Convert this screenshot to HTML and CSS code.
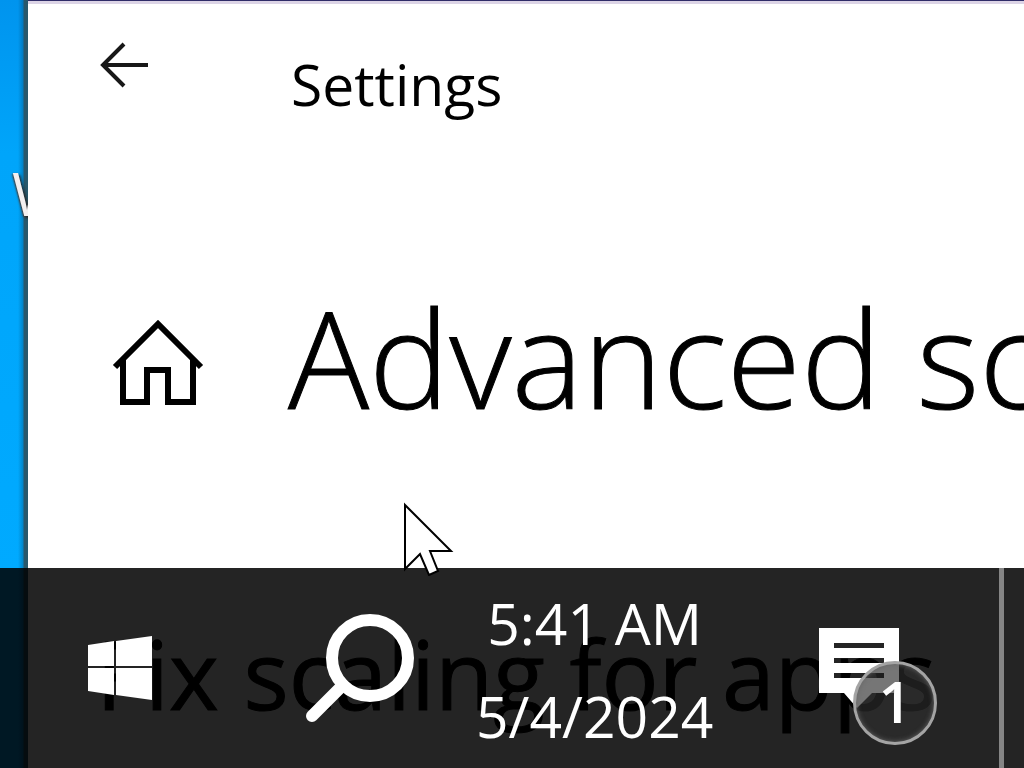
FILE: index.html
```html
<!DOCTYPE html>
<html lang="en">
<head>
<meta charset="utf-8">
<title>Settings</title>
<meta name="viewport" content="width=device-width, initial-scale=1">
<link rel="stylesheet" href="styles.css">
</head>
<body>
<div class="desktop">
  <aside class="wallpaper"><span class="shortcut-label">W</span></aside>
  <main class="window">
    <header class="titlebar">
      <button class="icon-button back" type="button" aria-label="Back">
        <svg width="50" height="46" viewBox="0 0 50 46" fill="none" stroke="#181818" stroke-width="4"><path d="M49 23H4M25 2L4 23L25 44"/></svg>
      </button>
      <span class="app-name">Settings</span>
    </header>
    <div class="page-head">
      <button class="icon-button home" type="button" aria-label="Home">
        <svg width="94" height="88" viewBox="0 0 94 88" fill="none" stroke="#000" stroke-width="6"><path d="M3 49L46 6L89 49M11 41V84H35V52H56V84H81V41"/></svg>
      </button>
      <h1 class="page-title">Advanced scaling settings</h1>
    </div>
    <h2 class="section-title">Fix scaling for apps</h2>
  </main>
</div>
<footer class="taskbar">
  <button class="icon-button start" type="button" aria-label="Start">
    <svg width="64" height="64" viewBox="0 0 64 64" fill="#fff"><path d="M0 9L26 5V30H0ZM28 5L64 0V30H28ZM0 32H26V59L0 55ZM28 32H64V64L28 59Z"/></svg>
  </button>
  <button class="icon-button search" type="button" aria-label="Search">
    <svg width="110" height="110" viewBox="0 0 110 110" fill="none" stroke="#fff"><circle cx="64" cy="45" r="38" stroke-width="12"/><path d="M37 72L6 103" stroke-width="12" stroke-linecap="round"/></svg>
  </button>
  <button class="icon-button clock" type="button"><time>5:41 AM</time><time>5/4/2024</time></button>
  <button class="icon-button notices" type="button" aria-label="1 new notification">
    <svg width="80" height="80" viewBox="0 0 80 80"><path fill="#fff" fill-rule="evenodd" d="M0 0H80V65H53L38 80L25 65H0ZM15 15V20H65V15ZM15 30V35H65V30ZM15 45V50H65V45Z"/></svg>
    <span class="badge">1</span>
  </button>
  <button class="icon-button show-desktop" type="button" aria-label="Show desktop"></button>
</footer>
<svg class="cursor" width="52" height="74" viewBox="0 0 52 74" fill="#fff" stroke="#000" stroke-width="2"><path d="M2 3V67L17 52L26 73L35 69L27 49H48Z"/></svg>
</body>
</html>
```
FILE: styles.css
```css
* { box-sizing: border-box; }

body {
  margin: 0;
  overflow: hidden;
  font-family: "Open Sans", "Noto Sans", sans-serif;
  color: #000;
}

.desktop {
  display: grid;
  grid-template-columns: 28px minmax(0, 1fr);
  height: 100vh;
}

.wallpaper {
  padding: 153px 0 0 12px;
  overflow: hidden;
  background:
    linear-gradient(90deg, transparent 18px, rgba(0, 50, 80, .3) 23px, #28586c 24px),
    linear-gradient(#0094ee, #00a5fa 20%, #00aaff 75%);
}

.shortcut-label {
  color: #f4f0f0;
  font-size: 60px;
  line-height: 80px;
  text-shadow: 2px 2px 3px #222, -1px 1px 2px #444;
}

.window {
  overflow: hidden;
  border-top: 1px solid #302c68;
  background: #fff;
  box-shadow: inset 0 3px #dcd4e6;
  white-space: nowrap;
}

.titlebar,
.page-head {
  display: grid;
  grid-template-columns: 260px 1fr;
}

.titlebar { padding-top: 41px; }

.icon-button {
  padding: 0;
  border: 0;
  background: none;
  color: inherit;
  font: inherit;
  text-align: left;
}

.icon-button svg { display: block; }

.back {
  align-self: start;
  padding-left: 71px;
}

.app-name {
  padding: 2px 0 2px 3px;
  font-size: 57px;
  line-height: 80px;
}

.page-head {
  align-items: center;
  padding-top: 131px;
}

.home { padding-left: 84px; }

.page-title {
  margin: 0;
  padding-bottom: 10px;
  font-size: 135px;
  font-weight: 300;
  line-height: 200px;
  -webkit-text-stroke: 1px #000;
}

.section-title {
  margin: 141px 0 0;
  padding-left: 68px;
  font-size: 95px;
  font-weight: 400;
  line-height: 130px;
  -webkit-text-stroke: 1px #000;
}

.taskbar {
  position: fixed;
  right: 0;
  bottom: 0;
  left: 0;
  display: grid;
  grid-template-columns: 218px 170px minmax(0, 1fr) 180px 25px;
  align-items: center;
  height: 200px;
  padding-left: 88px;
  background: rgba(0, 0, 0, .86);
  color: #fff;
}

.clock {
  display: grid;
  width: 232px;
  padding-top: 4px;
  font-size: 57px;
  line-height: 93px;
  text-align: center;
}

.notices { position: relative; }

.badge {
  position: absolute;
  top: 33px;
  left: 34px;
  width: 84px;
  height: 84px;
  border: 3px solid #a4a4a4;
  border-radius: 50%;
  background: rgba(45, 45, 45, .65);
  box-shadow: inset 0 0 5px #666;
  font-size: 58px;
  font-weight: 600;
  line-height: 74px;
  text-align: center;
}

.show-desktop {
  align-self: stretch;
  border-left: 5px solid #858585;
}

.cursor {
  position: fixed;
  top: 502px;
  left: 403px;
}
```
